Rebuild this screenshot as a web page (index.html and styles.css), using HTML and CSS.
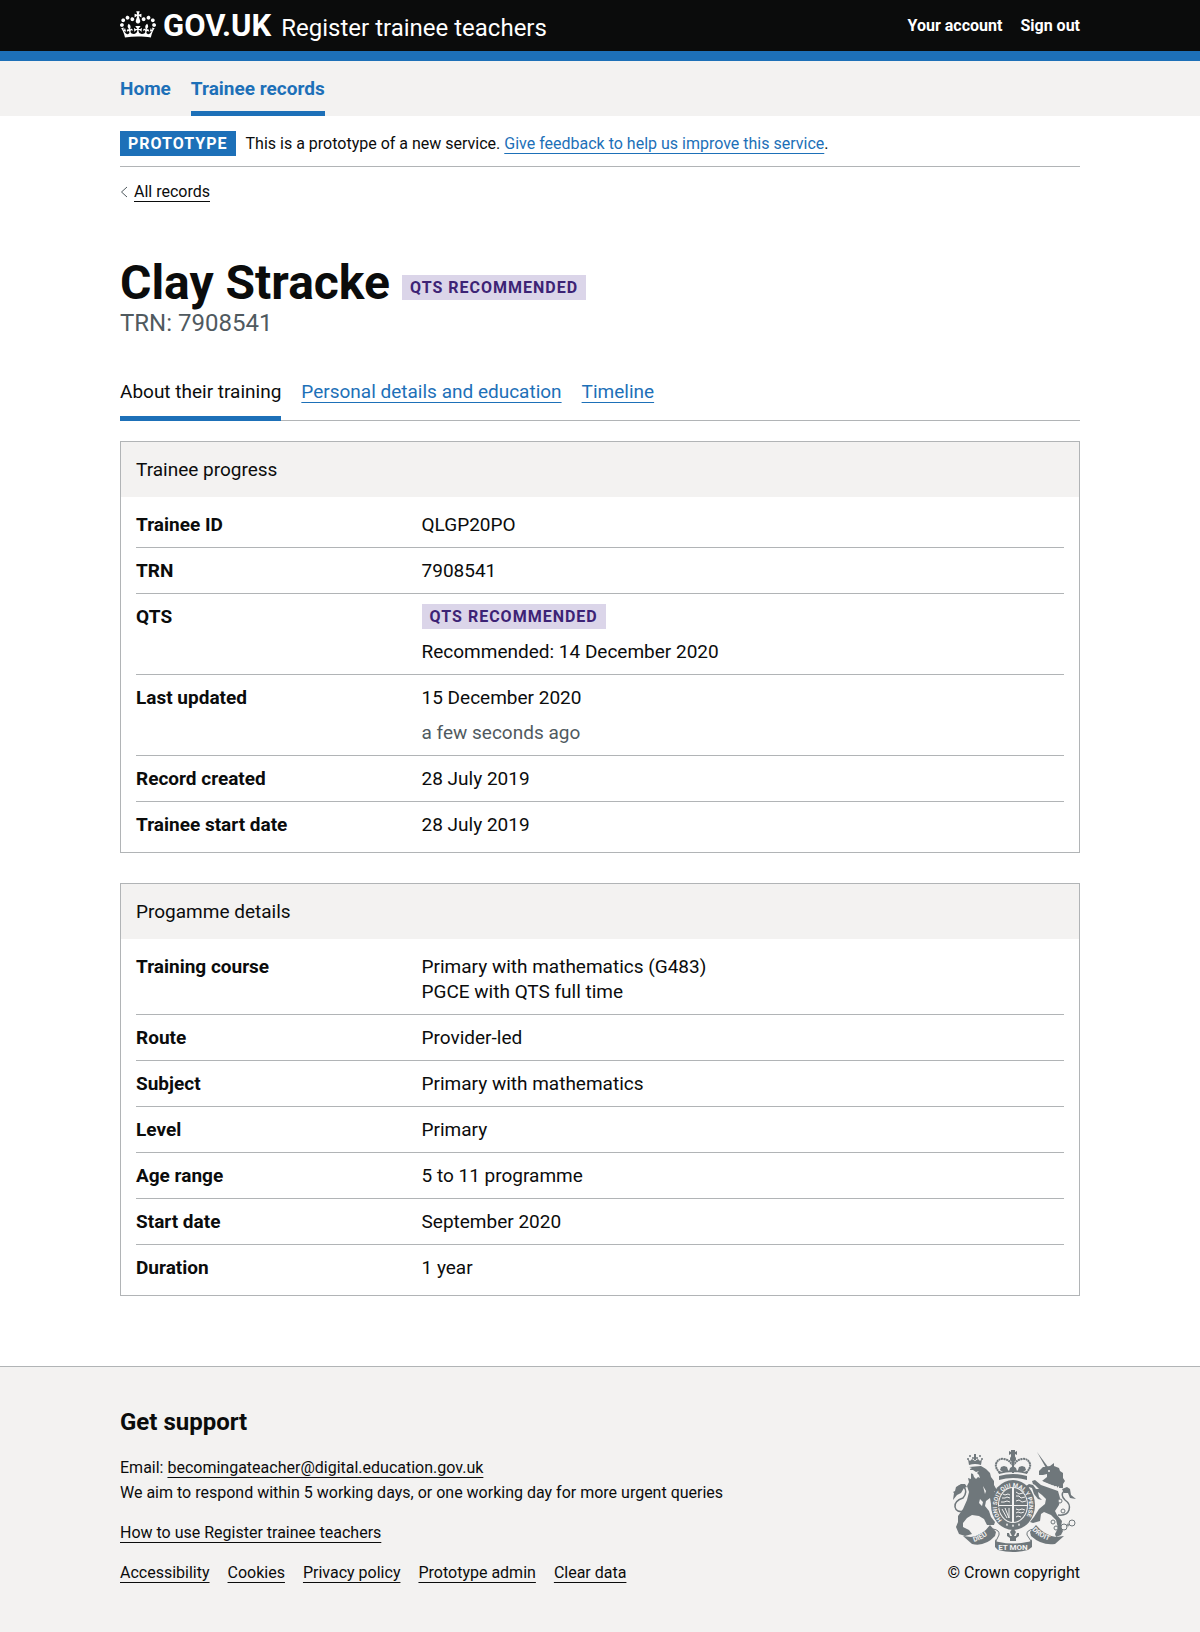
FILE: index.html
```html
<!DOCTYPE html>
<html lang="en">
<head>
<meta charset="utf-8">
<meta name="viewport" content="width=device-width, initial-scale=1">
<title>Clay Stracke - Register trainee teachers - GOV.UK</title>
<link rel="stylesheet" href="styles.css">
</head>
<body>
<header class="header">
  <div class="container header-row">
    <a class="logo" href="#">
      <svg class="crown" viewBox="0 0 132 97" width="36" height="27" aria-hidden="true"><path fill="currentColor" fill-rule="evenodd" d="M25 30.2c3.5 1.5 7.7-.2 9.1-3.7 1.5-3.6-.2-7.8-3.9-9.2-3.6-1.4-7.6.3-9.1 3.9-1.4 3.5.3 7.5 3.9 9zM9 39.5c3.6 1.5 7.8-.2 9.2-3.7 1.5-3.6-.2-7.8-3.9-9.1-3.6-1.5-7.6.2-9.1 3.8-1.4 3.5.3 7.5 3.8 9zM4.4 57.2c3.5 1.5 7.7-.2 9.1-3.8 1.5-3.6-.2-7.7-3.9-9.1-3.5-1.5-7.6.3-9.1 3.8-1.4 3.5.3 7.6 3.9 9.1zm38.3-21.4c3.5 1.5 7.7-.2 9.1-3.8 1.5-3.6-.2-7.7-3.9-9.1-3.6-1.5-7.6.3-9.1 3.8-1.3 3.6.4 7.7 3.9 9.1zm64.4-5.6c-3.6 1.5-7.8-.2-9.1-3.7-1.5-3.6.2-7.8 3.8-9.2 3.6-1.4 7.7.3 9.2 3.9 1.3 3.5-.4 7.5-3.9 9zm15.9 9.3c-3.6 1.5-7.7-.2-9.1-3.7-1.5-3.6.2-7.8 3.7-9.1 3.6-1.5 7.7.2 9.2 3.8 1.5 3.5-.3 7.5-3.8 9zm4.7 17.7c-3.6 1.5-7.8-.2-9.2-3.8-1.5-3.6.2-7.7 3.9-9.1 3.6-1.5 7.7.3 9.2 3.8 1.3 3.5-.4 7.6-3.9 9.1zM89.3 35.8c-3.6 1.5-7.8-.2-9.2-3.8-1.4-3.6.2-7.7 3.9-9.1 3.6-1.5 7.7.3 9.2 3.8 1.4 3.6-.3 7.7-3.9 9.1zM69.7 17.7l8.9 4.7V9.3l-8.9 2.8c-.2-.3-.5-.6-.9-.9L72.4 0H59.6l3.5 11.2c-.3.3-.6.5-.9.9l-8.8-2.8v13.1l8.8-4.7c.3.3.6.7.9.9l-5 15.4v.1c-.2.8-.4 1.6-.4 2.4 0 4.1 3.1 7.5 7 8.1h.2c.3 0 .7.1 1 .1.4 0 .7 0 1-.1h.2c4-.6 7.1-4.1 7.1-8.1 0-.8-.1-1.7-.4-2.4V34l-5.1-15.4c.4-.2.7-.6 1-.9zM66 92.8c16.9 0 32.8 1.1 47.1 3.2 4-16.9 8.9-26.7 14-33.5l-9.6-3.4c1 4.9 1.1 7.2 0 10.2-1.5-1.4-3-4.3-4.2-8.7L108.6 76c2.8-2 5-3.2 7.5-3.3-4.4 9.4-10 11.9-13.6 11.2-4.3-.8-6.3-4.6-5.6-7.9 1-4.7 5.7-5.9 8-.5 4.3-8.7-3-11.4-7.6-8.8 7.1-7.2 7.9-13.5 2.1-21.1-8 6.1-8.1 12.3-4.5 20.8-4.7-5.4-12.1-2.5-9.5 6.2 3.4-5.2 7.9-2 7.2 3.1-.6 4.3-6.4 7.8-13.5 7.2-10.3-.9-10.9-8-11.2-13.8 2.5-.5 7.1 1.8 11 7.3L80.2 60c-4.1 4.4-8 5.3-12.3 5.4 1.4-4.4 8-11.6 8-11.6H55.5s6.4 7.2 7.9 11.6c-4.2-.1-8-1-12.3-5.4l1.4 16.4c3.9-5.5 8.5-7.7 10.9-7.3-.3 5.8-.9 12.8-11.1 13.8-7.2.6-12.9-2.9-13.5-7.2-.7-5 3.8-8.3 7.1-3.1 2.7-8.7-4.6-11.6-9.4-6.2 3.7-8.5 3.6-14.7-4.6-20.8-5.8 7.6-5 13.9 2.2 21.1-4.7-2.6-11.9.1-7.7 8.8 2.3-5.5 7.1-4.2 8.1.5.7 3.3-1.3 7.1-5.7 7.9-3.5.7-9-1.8-13.5-11.2 2.5.1 4.7 1.3 7.5 3.3l-4.7-15.4c-1.2 4.4-2.7 7.2-4.3 8.7-1.1-3-.9-5.3 0-10.2l-9.5 3.4c5 6.9 9.9 16.7 14 33.5 14.8-2.1 30.8-3.2 47.7-3.2z"/></svg>
      <span class="logo-text">GOV.UK</span>
    </a>
    <a class="service-name" href="#">Register trainee teachers</a>
    <nav class="account-links" aria-label="Account">
      <a href="#">Your account</a>
      <a href="#">Sign out</a>
    </nav>
  </div>
</header>
<nav class="primary-nav" aria-label="Primary">
  <div class="container primary-nav-row">
    <a class="primary-link" href="#">Home</a>
    <a class="primary-link primary-link-current" href="#" aria-current="page">Trainee records</a>
  </div>
</nav>
<div class="page">
  <div class="container">
    <div class="phase-banner">
      <strong class="tag tag-phase">PROTOTYPE</strong>
      <span>This is a prototype of a new service. <a class="link" href="#">Give feedback to help us improve this service</a>.</span>
    </div>
    <div class="back">
      <svg viewBox="0 0 8 12" width="8" height="12" aria-hidden="true"><path d="M7 1 1.500 6 7 11" fill="none" stroke="#505a5f"/></svg>
      <a class="link link-text" href="#">All records</a>
    </div>
    <main>
      <div class="title-row">
        <h1 class="title">Clay Stracke</h1>
        <strong class="tag tag-purple">QTS RECOMMENDED</strong>
      </div>
      <p class="caption">TRN: 7908541</p>
      <nav class="tabs" aria-label="Record sections">
        <a class="tab tab-current" href="#" aria-current="page">About their training</a>
        <a class="tab" href="#">Personal details and education</a>
        <a class="tab" href="#">Timeline</a>
      </nav>
      <section class="card">
        <h2 class="card-title">Trainee progress</h2>
        <dl class="summary">
          <div class="row"><dt>Trainee ID</dt><dd>QLGP20PO</dd></div>
          <div class="row"><dt>TRN</dt><dd>7908541</dd></div>
          <div class="row"><dt>QTS</dt><dd><strong class="tag tag-purple">QTS RECOMMENDED</strong><p>Recommended: 14 December 2020</p></dd></div>
          <div class="row"><dt>Last updated</dt><dd><p>15 December 2020</p><p class="hint">a few seconds ago</p></dd></div>
          <div class="row"><dt>Record created</dt><dd>28 July 2019</dd></div>
          <div class="row"><dt>Trainee start date</dt><dd>28 July 2019</dd></div>
        </dl>
      </section>
      <section class="card">
        <h2 class="card-title">Progamme details</h2>
        <dl class="summary">
          <div class="row"><dt>Training course</dt><dd><p>Primary with mathematics (G483)<br>PGCE with QTS full time</p></dd></div>
          <div class="row"><dt>Route</dt><dd>Provider-led</dd></div>
          <div class="row"><dt>Subject</dt><dd>Primary with mathematics</dd></div>
          <div class="row"><dt>Level</dt><dd>Primary</dd></div>
          <div class="row"><dt>Age range</dt><dd>5 to 11 programme</dd></div>
          <div class="row"><dt>Start date</dt><dd>September 2020</dd></div>
          <div class="row"><dt>Duration</dt><dd>1 year</dd></div>
        </dl>
      </section>
    </main>
  </div>
</div>
<footer class="footer">
  <div class="container footer-row">
    <div>
      <h2 class="footer-title">Get support</h2>
      <p>Email: <a class="link link-text" href="#">becomingateacher@digital.education.gov.uk</a><br>We aim to respond within 5 working days, or one working day for more urgent queries</p>
      <p class="footer-para"><a class="link link-text" href="#">How to use Register trainee teachers</a></p>
      <div class="footer-links">
        <a class="link link-text" href="#">Accessibility</a>
        <a class="link link-text" href="#">Cookies</a>
        <a class="link link-text" href="#">Privacy policy</a>
        <a class="link link-text" href="#">Prototype admin</a>
        <a class="link link-text" href="#">Clear data</a>
      </div>
    </div>
    <a class="copyright" href="#">
      <svg class="crest" viewBox="0 0 125 103" width="125" height="103" aria-hidden="true">
        <defs>
          <path id="garter" d="M51 71A16 19 0 1 1 73 71"/>
          <path id="motto-left" d="M23 93Q34 90 43 80"/>
          <path id="motto-right" d="M81 81Q89 90 106 94"/>
        </defs>
        <g fill="#6f777b">
          <!-- royal crown -->
          <path d="M60 1h4v2l2-1v4l-2-1v3h-4V5l-2 1V2l2 1z"/>
          <circle cx="62" cy="10" r="3"/>
          <path fill="none" stroke="#6f777b" stroke-width="2" stroke-dasharray="2 .5" d="M49 24q-5-5-4-9 2-6 8-5 6 1 8 6M75 24q5-5 4-9-2-6-8-5-6 1-8 6"/>
          <path d="M61 10h2v14h-2zM47 22l5 1-3-2 1-3 3-1 3 1 1 3 1 1 1-3 3-2 3 2 1 3 1-1 1-3 3-1 3 1 1 3-3 2 5-1-1 3q-14-4-28 0z"/>
          <path d="M48 27q14-4 28 0v4q-14-4-28 0z"/>
          <!-- garter and shield -->
          <ellipse cx="62" cy="56" rx="22" ry="25"/>
          <ellipse cx="62" cy="56" rx="15" ry="18" fill="#f3f2f1"/>
          <ellipse cx="62" cy="56" rx="14" ry="17"/>
          <path fill="#f3f2f1" d="M61 39h2v34h-2zM48 56h28v1H48z"/>
          <path fill="none" stroke="#f3f2f1" d="M52 45l2 1 3-1 2 1M51 49h3l2-1 3 1M50 53h3l3-1 3 1M65 43l3 2 4-1M65 47h3l2 2 4-1M65 52l3-1 3 2 4-1M51 60l5 9M54 59l4 10M58 59v10M65 60l3 1 3-1 3 1M65 64l2-1 3 1 3-1M65 68l2-1 3 1"/>
          <path fill="#f3f2f1" d="m55 76 1-2 1 2-1 1zM61 77l1-2 1 2-1 1zM67 76l1-2 1 2-1 1z"/>
          <!-- lion -->
          <g fill="#6f777b"><circle cx="17" cy="10" r="1"/><circle cx="19" cy="7" r="1"/><circle cx="22" cy="9" r="1"/><circle cx="24" cy="6" r="1"/><circle cx="26" cy="9" r="1"/><circle cx="29" cy="7" r="1"/><circle cx="31" cy="10" r="1"/></g>
          <path d="M23 5h2v6h-2zM17 10l2 2 2-2 3 2 3-2 2 2 2-2-1 6q-6-2-12 0z"/>
          <path d="M18 18l12-1 5 3 4 4 1 4 3 4 0 4 4 7-4-1 4 8-1 4 2 5-5 1-3-5-1-6-4 3-1 5 4 5 2 6 4 5-1 3-7 0-3-6-5-3-7-1-5 3-4 5 0 4 6 3 3 4-7 2-6-2-3-7 2-5 0-6 5-7 4-9 2-8-2-6 2-4-1-4 3 1 0-6-1-4 2-1z"/>
          <path fill="#f3f2f1" d="m19 21 3 0 3 2 3-1-2 2 2 2 1 3-2-1-2 2-2-2-1-3-3-1zM29 50l3 3-1 4-3-3zM32 37l3 5-1 3z"/>
          <path fill="none" stroke="#6f777b" stroke-width="1.500" d="M14 62Q5 64 4 58T12 49q5-6 1-11-3-3-6 0"/>
          <path d="m10 35 4 0 2 3-3 1-3 5-4 2-4 5 1-7-1-1 2-1 1-4z"/>
          <!-- unicorn -->
          <path d="m86 3 11 15-2 1z"/>
          <path d="m93 18 6-1 4-3 0 3 5 2 1 3 3 2 0 5 2 3-2 3 0 4-4 0-17-7 5-4 0-3-4 1-4 0 0-4 4-4z"/>
          <path fill="none" stroke="#f3f2f1" stroke-width="3" stroke-dasharray="2 1" d="M90 33q8 5 18 6"/>
          <path d="m90 36 17 6 2 7-1 7-4 6 2 4 5 6-1 6 2 4-2 4-5 2-1-3 3-6-2-8-5-5-7-3-3 2-1 7-7 2-3-1 4-5 5-8 6-5 1-5-4-4-4-3 1 5 3 3-4-1-4-5-2-6-3-1-1 3-2-4 3-2 4 1 3 4 3 0-4-4-2-1-1-3 3-1z"/>
          <circle cx="98" cy="22" r="1" fill="#f3f2f1"/>
          <path fill="none" stroke="#6f777b" stroke-width="1.500" d="M107 66q9 1 11-5t-4-10q-5-5-1-9"/>
          <path d="m111 40 5-2 3 2 1 6 5 4-6-1-2-5-4 0z"/>
          <g fill="#f3f2f1" stroke="#6f777b"><circle cx="109" cy="52" r="2"/><circle cx="112" cy="62" r="2"/><circle cx="102" cy="73" r="2"/><circle cx="105" cy="79" r="2"/><circle cx="113" cy="78" r="3"/><circle cx="121" cy="74" r="3"/><circle cx="117" cy="76" r="1"/></g>
          <!-- motto scroll -->
          <path d="M12 87l8 1q12-2 19-12l6 7-1 4Q34 98 21 95zM113 87l-8 1q-12-2-20-12l-6 7 1 4q11 10 24 8z"/>
          <path fill="none" stroke="#6f777b" d="M42 80q7 1 6 6l-3 6M83 80q-8 1-7 6l4 6"/>
          <path d="M44 90q1 3 4 3 14 3 28 0 4 0 5-3l0 8-4 3q-15 4-30 0l-3-3z"/>
          <path d="m62 79 3 4-2 4 2 0 1-3 2 0 0 3-3 2 0 3h-6v-3l-3-2 0-3 2 0 1 3 2 0-2-4z"/>
        </g>
        <g class="crest-text">
          <text class="garter-text"><textPath href="#garter">HONI SOIT QUI MAL Y PENSE</textPath></text>
          <text><textPath href="#motto-left">DIEU</textPath></text>
          <text class="motto-centre" x="62" y="101">ET MON</text>
          <text><textPath href="#motto-right">DROIT</textPath></text>
        </g>
      </svg>
      <span>© Crown copyright</span>
    </a>
  </div>
</footer>
</body>
</html>
```
FILE: styles.css
```css
* { box-sizing: border-box; }
body { margin: 0; background: #f3f2f1; color: #0b0c0c; font: 16px/25px Roboto, "Liberation Sans", sans-serif; }
h1, h2, p, dl, dd { margin: 0; }
.container { max-width: 1200px; margin: 0 auto; padding: 0 120px; }
.page { background: #fff; padding-bottom: 70px; }

.header { background: #0b0c0c; border-bottom: 10px solid #1d70b8; }
.header-row { display: flex; align-items: center; height: 51px; }
.header a { color: #fff; text-decoration: none; }
.logo { display: flex; align-items: center; gap: 7px; margin-right: 10px; }
.crown { display: block; margin-bottom: 3px; }
.logo-text { font-size: 31px; line-height: 30px; font-weight: 700; }
.service-name { font-size: 24px; line-height: 30px; padding-top: 4px; }
.account-links { display: flex; gap: 18px; margin-left: auto; font-weight: 700; }

.primary-nav { background: #f3f2f1; }
.primary-nav-row { display: flex; gap: 20px; }
.primary-link { padding: 15px 0 10px; border-bottom: 5px solid transparent; color: #1d70b8; font-size: 19px; font-weight: 700; text-decoration: none; }
.primary-link-current { border-bottom-color: #1d70b8; }

.link { color: #1d70b8; text-decoration: underline 1px; text-underline-offset: 4px; text-decoration-skip-ink: none; }
.link-text { color: #0b0c0c; }
.tag { display: inline-block; padding: 0 8px; font-size: 16px; line-height: 25px; font-weight: 700; letter-spacing: 1px; }
.tag-phase { background: #1d70b8; color: #fff; }
.tag-purple { background: #dbd5e9; color: #3d2375; }

.phase-banner { display: flex; gap: 10px; padding: 15px 0 10px; border-bottom: 1px solid #b1b4b6; }
.back { display: flex; align-items: center; gap: 6px; padding-top: 12px; }

.title-row { display: flex; align-items: flex-end; gap: 12px; margin-top: 54px; }
.title-row .tag { margin-bottom: 8px; }
.title { font-size: 48px; line-height: 50px; }
.caption { color: #505a5f; font-size: 24px; line-height: 30px; }
.tabs { display: flex; gap: 20px; margin: 41px 0 20px; border-bottom: 1px solid #b1b4b6; }
.tab { padding-bottom: 12px; margin-bottom: -1px; border-bottom: 5px solid transparent; color: #1d70b8; font-size: 19px; text-decoration: underline 1px; text-underline-offset: 4px; text-decoration-skip-ink: none; }
.tab-current { border-bottom-color: #1d70b8; color: #0b0c0c; text-decoration: none; }

.card { border: 1px solid #b1b4b6; font-size: 19px; }
.card + .card { margin-top: 30px; }
.card-title { padding: 15px; background: #f3f2f1; font-size: 19px; font-weight: 400; }
.summary { padding: 5px 15px; }
.row { display: grid; grid-template-columns: 4fr 9fr; padding: 10px 0; border-bottom: 1px solid #b1b4b6; }
.row:last-child { border-bottom: 0; }
.row dt { font-weight: 700; }
.row dd { display: flex; flex-direction: column; align-items: flex-start; gap: 10px; }
.hint { color: #505a5f; }

.footer { border-top: 1px solid #b1b4b6; padding: 40px 0 46px; }
.footer-row { display: flex; justify-content: space-between; align-items: flex-end; gap: 30px; }
.footer-title { margin-bottom: 18px; font-size: 24px; line-height: 30px; }
.footer-para { margin: 15px 0; }
.footer-links { display: flex; flex-wrap: wrap; gap: 0 18px; }
.copyright { display: flex; flex-direction: column; align-items: center; gap: 8px; color: #0b0c0c; text-decoration: none; white-space: nowrap; }
.crest { display: block; }
.crest-text { fill: #f3f2f1; font-size: 7px; font-weight: 700; }
.garter-text { font-size: 6px; }
.motto-centre { font-size: 8px; text-anchor: middle; }
```
